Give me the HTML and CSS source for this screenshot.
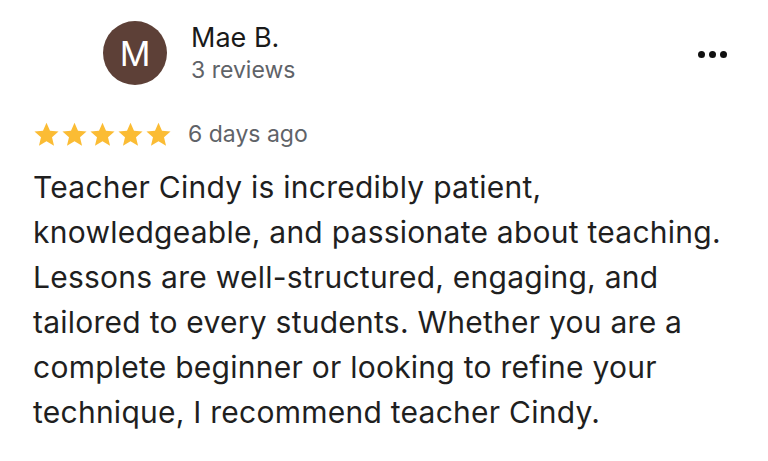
FILE: index.html
```html
<!DOCTYPE html>
<html>
<head>
<meta charset="utf-8">
<link rel="stylesheet" href="styles.css">
</head>
<body>
<div class="review">
  <div class="header">
    <div class="avatar">M</div>
    <div class="who">
      <div class="name">Mae B.</div>
      <div class="count">3 reviews</div>
    </div>
    <div class="more"><span></span><span></span><span></span></div>
  </div>
  <div class="meta">
    <div class="stars">
      <svg viewBox="0 0 24 24" class="star"><path d="M12 1.5l3.1 7.1 7.6.7-5.8 5.1 1.8 7.6L12 18l-6.7 4 1.8-7.6-5.8-5.1 7.6-.7z"/></svg>
      <svg viewBox="0 0 24 24" class="star"><path d="M12 1.5l3.1 7.1 7.6.7-5.8 5.1 1.8 7.6L12 18l-6.7 4 1.8-7.6-5.8-5.1 7.6-.7z"/></svg>
      <svg viewBox="0 0 24 24" class="star"><path d="M12 1.5l3.1 7.1 7.6.7-5.8 5.1 1.8 7.6L12 18l-6.7 4 1.8-7.6-5.8-5.1 7.6-.7z"/></svg>
      <svg viewBox="0 0 24 24" class="star"><path d="M12 1.5l3.1 7.1 7.6.7-5.8 5.1 1.8 7.6L12 18l-6.7 4 1.8-7.6-5.8-5.1 7.6-.7z"/></svg>
      <svg viewBox="0 0 24 24" class="star"><path d="M12 1.5l3.1 7.1 7.6.7-5.8 5.1 1.8 7.6L12 18l-6.7 4 1.8-7.6-5.8-5.1 7.6-.7z"/></svg>
    </div>
    <div class="date">6 days ago</div>
  </div>
  <p class="text">Teacher Cindy is incredibly patient,<br>knowledgeable, and passionate about teaching.<br>Lessons are well-structured, engaging, and<br>tailored to every students. Whether you are a<br>complete beginner or looking to refine your<br>technique, I recommend teacher Cindy.</p>
</div>
</body>
</html>
```
FILE: styles.css
```css
html, body {
  margin: 0;
  padding: 0;
  background: #ffffff;
}
body {
  width: 768px;
  height: 461px;
  overflow: hidden;
  font-family: Inter, "Liberation Sans", sans-serif;
  color: #1f1f1f;
}
.review {
  padding: 21px 33px 0 33px;
}
.header {
  display: flex;
  align-items: flex-start;
}
.avatar {
  width: 64px;
  height: 64px;
  border-radius: 50%;
  background: #5d4037;
  color: #fff;
  font-size: 34px;
  display: flex;
  align-items: center;
  justify-content: center;
  margin-left: 70px;
  flex-shrink: 0;
}
.who {
  margin-left: 24px;
  padding-top: 1px;
}
.name {
  font-size: 27px;
  line-height: 32px;
  color: #1a1a1a;
}
.count {
  font-size: 23px;
  line-height: 32px;
  color: #5f6368;
}
.more {
  margin-left: auto;
  margin-top: 30px;
  margin-right: 8px;
  display: flex;
  gap: 4px;
}
.more span {
  width: 7px;
  height: 7px;
  border-radius: 50%;
  background: #111;
}
.meta {
  display: flex;
  align-items: center;
  margin-top: 34px;
}
.stars {
  display: flex;
  gap: 1px;
}
.star {
  width: 27px;
  height: 27px;
  fill: #fbbc34;
}
.date {
  margin-left: 16px;
  font-size: 23px;
  color: #5f6368;
}
.text {
  margin: 17px 0 0 0;
  font-size: 30px;
  line-height: 45px;
  letter-spacing: 0.25px;
  color: #1f1f1f;
}
```
